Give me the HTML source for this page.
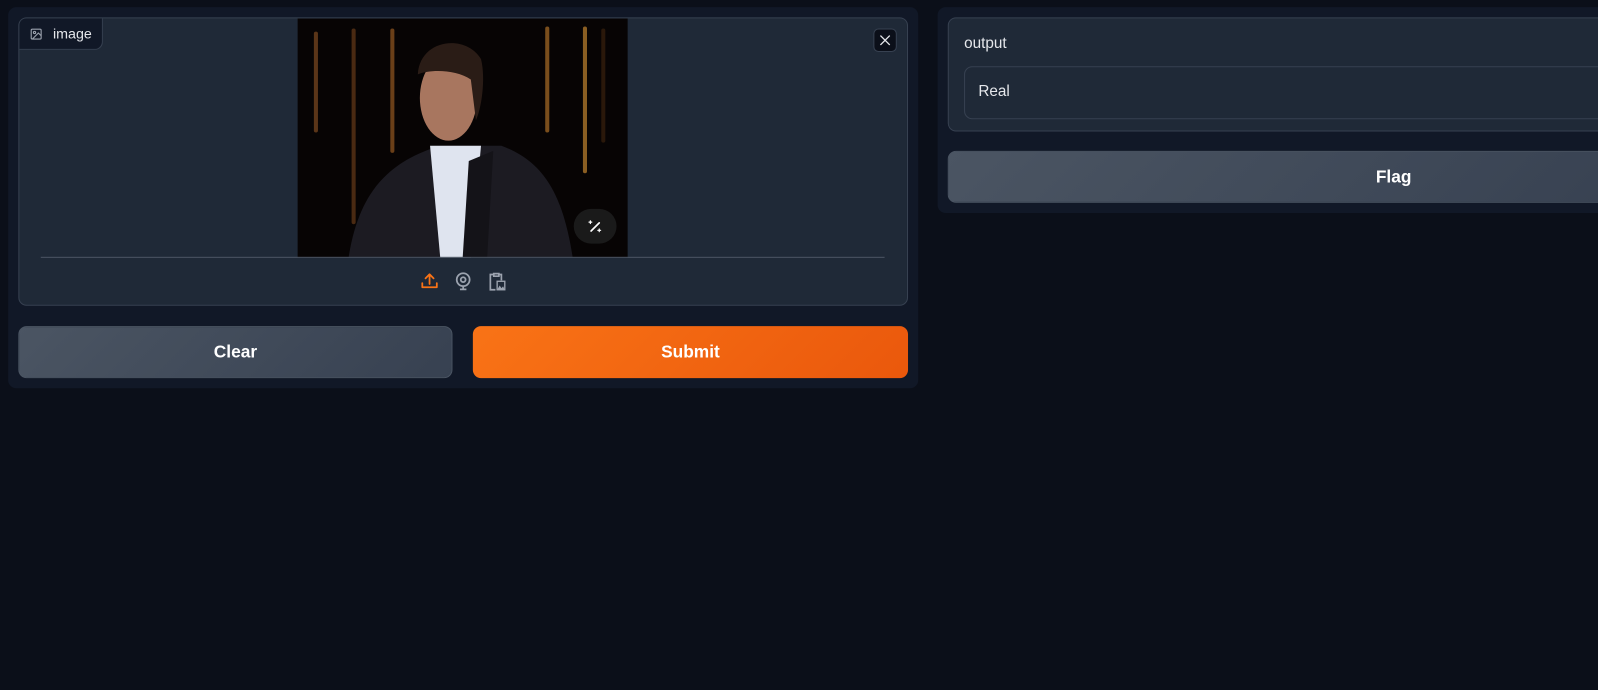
<!DOCTYPE html>
<html><head><meta charset="utf-8">
<style>
*{box-sizing:border-box;margin:0;padding:0}
html,body{width:1598px;height:690px;overflow:hidden;background:#0b0f19;font-family:"Liberation Sans",sans-serif;color:#e5e7eb}
#w{position:absolute;left:0;top:0;width:1568px;height:677px;transform:scale(1.0191);transform-origin:0 0}
.panel{position:absolute;background:#111827;border-radius:8px}
.box{position:absolute;background:#1f2937;border:1px solid #374151;border-radius:8px}
.btn{position:absolute;border-radius:8px;display:flex;align-items:center;justify-content:center;font-weight:bold;font-size:17px;color:#fff}
</style></head><body><div id="w">
<div class="panel" style="left:8px;top:7px;width:893px;height:374px"></div>
<div class="box" style="left:18px;top:17px;width:873px;height:283px;overflow:hidden">
  <div style="position:absolute;left:0;top:0;width:82px;height:31px;background:#111827;border-right:1px solid #374151;border-bottom:1px solid #374151;border-bottom-right-radius:8px;display:flex;align-items:center;padding-left:10px;font-size:14px;color:#e5e7eb">
    <svg width="13" height="13" viewBox="0 0 24 24" fill="none" stroke="#9ca3af" stroke-width="2"><rect x="3" y="3" width="18" height="18" rx="2"/><circle cx="9" cy="9" r="2"/><path d="M21 15l-5-5L5 21"/></svg>
    <span style="margin-left:10px">image</span>
  </div>
  <svg style="position:absolute;left:273px;top:0" width="324" height="235" viewBox="0 0 324 235">
    <rect width="324" height="235" fill="#070404"/>
    <g stroke-width="4" stroke-linecap="round">
      <line x1="18" y1="15" x2="18" y2="110" stroke="#5a3518"/>
      <line x1="55" y1="12" x2="55" y2="200" stroke="#4a2a12"/>
      <line x1="93" y1="12" x2="93" y2="130" stroke="#6a3f18"/>
      <line x1="245" y1="10" x2="245" y2="110" stroke="#7a4e1c"/>
      <line x1="282" y1="10" x2="282" y2="150" stroke="#8a5e22"/>
      <line x1="300" y1="12" x2="300" y2="120" stroke="#2a180a"/>
    </g>
    <path d="M50 235 C60 170 90 140 140 125 L200 125 C240 140 260 170 270 235 Z" fill="#1c1b22"/>
    <path d="M130 125 L180 125 L170 235 L140 235 Z" fill="#dfe4ef"/>
    <path d="M168 140 L192 130 L186 235 L162 235 Z" fill="#141318"/>
    <ellipse cx="148" cy="78" rx="28" ry="42" fill="#a8765f"/>
    <path d="M118 55 C120 20 165 15 180 40 C185 60 180 90 175 100 L170 60 C155 50 130 50 118 55 Z" fill="#2a1c16"/>
  </svg>
  <div style="position:absolute;left:544px;top:187px;width:42px;height:34px;border-radius:17px;background:#1a1a1a;display:flex;align-items:center;justify-content:center">
    <svg width="16" height="16" viewBox="0 0 24 24" fill="none" stroke="#fff" stroke-width="2.5" stroke-linecap="round"><path d="M6 19L18 7"/><path d="M5 4v4M3 6h4M18 16v4M16 18h4" stroke-width="1.8"/></svg>
  </div>
  <div style="position:absolute;left:838px;top:10px;width:23px;height:23px;border:1px solid #374151;border-radius:5px;background:#0b0f19;display:flex;align-items:center;justify-content:center">
    <svg width="11" height="11" viewBox="0 0 12 12" stroke="#e5e7eb" stroke-width="1.4"><path d="M1 1L11 11M11 1L1 11"/></svg>
  </div>
  <div style="position:absolute;left:21px;top:234px;width:828px;height:1px;background:#4b5563"></div>
  <svg style="position:absolute;left:393px;top:248px" width="19" height="19" viewBox="0 0 24 24" fill="none" stroke="#f97316" stroke-width="2.2" stroke-linecap="round" stroke-linejoin="round"><path d="M3 15v5h18v-5"/><path d="M12 16V4M7 9l5-5 5 5"/></svg>
  <svg style="position:absolute;left:426px;top:248px" width="19" height="20" viewBox="0 0 24 24" fill="none" stroke="#9ca3af" stroke-width="2.2"><circle cx="12" cy="10" r="8"/><circle cx="12" cy="10" r="3"/><path d="M8 22h8M12 18v4"/></svg>
  <svg style="position:absolute;left:458px;top:248px" width="20" height="20" viewBox="0 0 24 24" fill="none" stroke="#9ca3af" stroke-width="2"><path d="M9 3h6v3H9z"/><path d="M9 4H5v18h6"/><path d="M15 4h3v7"/><path d="M13 22l3-5 2 3 2-2 2 4z" fill="#9ca3af" stroke="none"/><rect x="13" y="12" width="9" height="10" fill="none" stroke="#9ca3af" stroke-width="1.6"/></svg>
</div>
<div class="btn" style="left:18px;top:320px;width:426px;height:51px;background:linear-gradient(135deg,#4b5563,#374151);border:1px solid #4b5563">Clear</div>
<div class="btn" style="left:464px;top:320px;width:427px;height:51px;background:linear-gradient(135deg,#f97316,#ea580c)">Submit</div>

<div class="panel" style="left:920px;top:7px;width:700px;height:202px"></div>
<div class="box" style="left:930px;top:17px;width:690px;height:112px">
  <div style="position:absolute;left:15px;top:16px;font-size:15px;color:#e5e7eb">output</div>
  <div style="position:absolute;left:15px;top:47px;width:700px;height:52px;border:1px solid #374151;border-radius:8px;background:#1f2937;padding:15px 13px;font-size:15px">Real</div>
</div>
<div class="btn" style="left:930px;top:148px;width:690px;height:51px;background:linear-gradient(135deg,#4b5563,#374151);border:1px solid #4b5563;padding-right:234px;justify-content:flex-end">Flag</div>
</div></body></html>
